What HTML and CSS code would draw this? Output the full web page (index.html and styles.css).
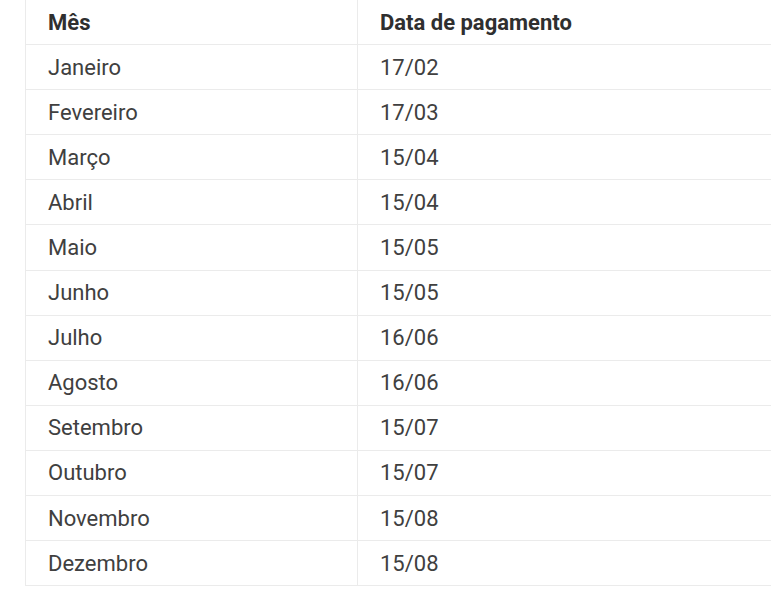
FILE: index.html
```html
<!DOCTYPE html>
<html lang="pt">
<head>
<meta charset="utf-8">
<link rel="stylesheet" href="styles.css">
</head>
<body>
<div class="wrap">
<table class="pay">
<thead>
<tr><th class="c1">Mês</th><th class="c2">Data de pagamento</th></tr>
</thead>
<tbody>
<tr><td class="c1">Janeiro</td><td class="c2">17/02</td></tr>
<tr><td class="c1">Fevereiro</td><td class="c2">17/03</td></tr>
<tr><td class="c1">Março</td><td class="c2">15/04</td></tr>
<tr><td class="c1">Abril</td><td class="c2">15/04</td></tr>
<tr><td class="c1">Maio</td><td class="c2">15/05</td></tr>
<tr><td class="c1">Junho</td><td class="c2">15/05</td></tr>
<tr><td class="c1">Julho</td><td class="c2">16/06</td></tr>
<tr><td class="c1">Agosto</td><td class="c2">16/06</td></tr>
<tr><td class="c1">Setembro</td><td class="c2">15/07</td></tr>
<tr><td class="c1">Outubro</td><td class="c2">15/07</td></tr>
<tr><td class="c1">Novembro</td><td class="c2">15/08</td></tr>
<tr><td class="c1">Dezembro</td><td class="c2">15/08</td></tr>
</tbody>
</table>
</div>
</body>
</html>
```
FILE: styles.css
```css
html, body {
  margin: 0;
  padding: 0;
  background: #ffffff;
  overflow: hidden;
}
.wrap {
  padding-left: 25px;
  margin-top: -1px;
}
.pay {
  border-collapse: collapse;
  width: 100%;
  font-family: Roboto, "Liberation Sans", sans-serif;
  font-size: 22px;
  color: #404040;
}
.pay th, .pay td {
  border: 1px solid #ebebeb;
  height: 45.1px;
  padding: 0 0 0 22px;
  text-align: left;
  vertical-align: middle;
  box-sizing: border-box;
}
.pay th {
  font-weight: 700;
  color: #2f2f2f;
}
.pay td {
  font-weight: 400;
}
.pay tr > :last-child {
  border-right: none;
}
.c1 {
  width: 332px;
}
```
